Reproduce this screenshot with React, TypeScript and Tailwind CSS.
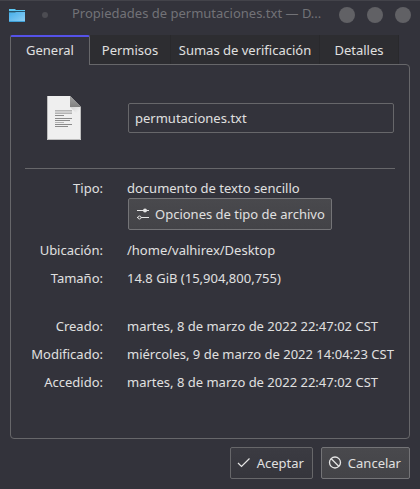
import { useState } from 'react';

const tabs = [
  { name: 'General', width: 'w-20' },
  { name: 'Permisos', width: 'w-[81px]' },
  { name: 'Sumas de verificación', width: 'w-[149px]' },
  { name: 'Detalles', width: 'w-[79px]' },
];

const dates = [
  ['Creado:', 'martes, 8 de marzo de 2022 22:47:02 CST'],
  ['Modificado:', 'miércoles, 9 de marzo de 2022 14:04:23 CST'],
  ['Accedido:', 'martes, 8 de marzo de 2022 22:47:02 CST'],
];

function FolderIcon() {
  return (
    <svg width="16" height="14" viewBox="0 0 16 14" className="shrink-0" aria-hidden="true">
      <defs>
        <linearGradient id="folder" x1="0" y1="0" x2="1" y2="1">
          <stop offset="0" stopColor="#46aeea" />
          <stop offset="1" stopColor="#8fd0f5" />
        </linearGradient>
      </defs>
      <path d="M0 1h6l1 1h9v4H0z" fill="#5cc8f4" />
      <path d="M0 3h16v1.500H0z" fill="#27556f" />
      <path d="M0 5h6l1-1h9v10H0z" fill="url(#folder)" />
      <path d="M0 13h16v1H0z" fill="#3f9fd6" />
    </svg>
  );
}

function DocumentIcon() {
  return (
    <svg width="34" height="44" viewBox="0 0 34 44" aria-hidden="true">
      <defs>
        <linearGradient id="fold" x1="0" y1="0" x2="0" y2="1">
          <stop offset="0" stopColor="#a3a3a3" />
          <stop offset="1" stopColor="#808080" />
        </linearGradient>
        <linearGradient id="shade" x1="0" y1="0" x2="1" y2="1">
          <stop offset="0" stopColor="#d2d2d2" />
          <stop offset="0.6" stopColor="#efefef" />
        </linearGradient>
      </defs>
      <path d="M0 0h23l11 11v33H0z" fill="#efefef" />
      <path d="M23 11h11v11z" fill="url(#shade)" />
      <path d="M23 0l11 11H23z" fill="url(#fold)" />
      <path d="M0.500 0v43.500h33V11" fill="none" stroke="#bdbdbd" />
      <path d="M8 14h17v4H8z" fill="#cecece" />
      <path d="M8 14.500h17M8 17.500h17M8 26.500h9" stroke="#b3b3b3" />
      <path d="M8 19.500h9M8 22.500h17M8 24.500h15M8 28.500h17M8 30.500h13" stroke="#8b8b8b" />
    </svg>
  );
}

function SettingsIcon() {
  return (
    <svg width="14" height="14" viewBox="0 0 14 14" className="shrink-0" fill="none" stroke="#e6e6e6" aria-hidden="true">
      <path d="M2 3.500h12M6 10.500h8M2 10.500h1" />
      <circle cx="10" cy="3.500" r="2" fill="#e6e6e6" stroke="none" />
      <circle cx="4.500" cy="10.500" r="1.500" />
    </svg>
  );
}

function CheckIcon() {
  return (
    <svg width="14" height="14" viewBox="0 0 14 14" className="shrink-0" fill="none" stroke="#e6e6e6" strokeWidth="1.200" aria-hidden="true">
      <path d="M1 7l3.500 3.500L12.500 2.500" />
    </svg>
  );
}

function CancelIcon() {
  return (
    <svg width="14" height="14" viewBox="0 0 14 14" className="shrink-0" fill="none" stroke="#e6e6e6" strokeWidth="1.300" aria-hidden="true">
      <circle cx="7" cy="6.500" r="5.500" />
      <path d="M3 2.500l8 8" />
    </svg>
  );
}

function Row({ label, value }: { label: string; value: string }) {
  return (
    <div className="grid grid-cols-[78px_1fr] gap-6">
      <dt className="text-right">{label}</dt>
      <dd className="whitespace-nowrap">{value}</dd>
    </div>
  );
}

export default function App() {
  const [active, setActive] = useState('General');
  return (
    <div className="flex min-h-screen flex-col bg-[#33333b] font-['Noto_Sans',sans-serif] text-[13px] leading-5 text-[#e0e0e0]">
      <header className="flex h-[35px] items-start border-t border-[#43434a] px-[9px]">
        <div className="flex h-7 w-full items-center">
          <FolderIcon />
          <span className="ml-[17px] size-1.5 shrink-0 rounded-full bg-[#4c4c52]" />
          <h1 className="mr-3 ml-6 flex h-7 min-w-0 flex-1 items-start truncate pt-0.5 text-[#727277]">
            Propiedades de permutaciones.txt — D...
          </h1>
          <div className="flex gap-3">
            {['Minimizar', 'Maximizar', 'Cerrar'].map((name) => (
              <button key={name} aria-label={name} className="size-4 rounded-full bg-[#616165]" />
            ))}
          </div>
        </div>
      </header>

      <main className="flex flex-1 flex-col px-2.5 pb-2.5">
        <div role="tablist" className="-mb-px flex h-[30px]">
          {tabs.map(({ name, width }) => (
            <button
              key={name}
              role="tab"
              aria-selected={active === name}
              onClick={() => setActive(name)}
              className={`${width} whitespace-nowrap ${
                active === name
                  ? 'z-10 rounded-t-xs border-x border-t-2 border-x-[#67676a] border-t-[#5552e8] bg-[#33333b] pb-0.5'
                  : 'mb-px border-r border-[#29292c] bg-[#2d2d31]'
              }`}
            >
              {name}
            </button>
          ))}
        </div>

        <section role="tabpanel" className="flex-1 rounded-sm rounded-tl-none border border-[#67676a] px-3.5">
          <div className="grid grid-cols-[78px_1fr] items-center gap-[25px] border-b border-[#67676a] pt-[31px] pb-7">
            <div className="flex justify-center">
              <DocumentIcon />
            </div>
            <input
              aria-label="Nombre"
              defaultValue="permutaciones.txt"
              className="mr-px h-[30px] min-w-0 rounded-xs border border-[#67676a] bg-[#33333b] px-1.5 outline-none"
            />
          </div>

          <dl className="flex flex-col gap-2 pt-[9px]">
            <Row label="Tipo:" value="documento de texto sencillo" />
            <div className="-mt-2 mb-0.5 pl-[103px]">
              <dd>
                <button className="flex h-8 items-center gap-1.5 rounded-xs border border-[#747477] bg-linear-to-b from-[#49494d] to-[#434347] px-1.5 whitespace-nowrap">
                  <SettingsIcon />
                  Opciones de tipo de archivo
                </button>
              </dd>
            </div>
            <Row label="Ubicación:" value="/home/valhirex/Desktop" />
            <Row label="Tamaño:" value="14.8 GiB (15,904,800,755)" />
            <div className="flex flex-col gap-2 pt-5">
              {dates.map(([label, value]) => (
                <Row key={label} label={label} value={value} />
              ))}
            </div>
          </dl>
        </section>

        <footer className="flex justify-end gap-2 pt-2">
          <button className="flex h-8 items-center gap-1.5 rounded-xs border border-[#67676a] bg-linear-to-b from-[#3b3b42] to-[#35353c] pr-2 pl-1.5">
            <CheckIcon />
            Aceptar
          </button>
          <button className="flex h-8 items-center gap-1.5 rounded-xs border border-[#747477] bg-linear-to-b from-[#49494d] to-[#434347] pr-2 pl-1.5">
            <CancelIcon />
            Cancelar
          </button>
        </footer>
      </main>
    </div>
  );
}
